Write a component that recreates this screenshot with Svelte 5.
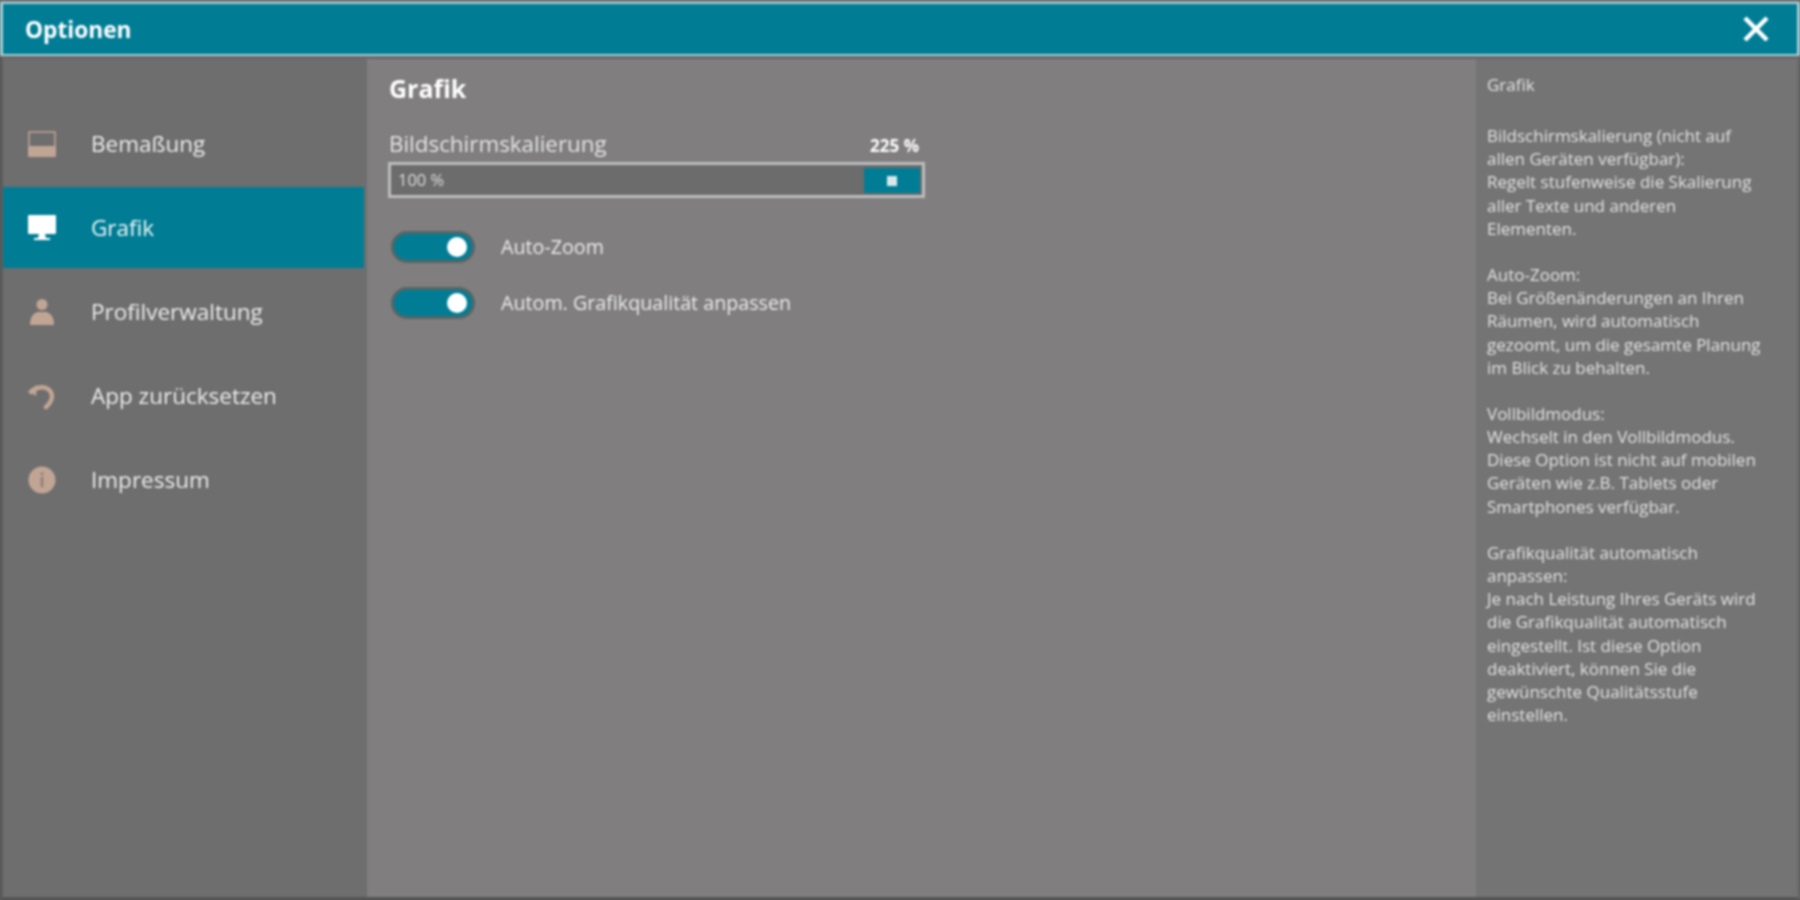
<script>
  const navItems = [
    { id: 'size', label: 'Bemaßung' },
    { id: 'screen', label: 'Grafik', active: true },
    { id: 'user', label: 'Profilverwaltung' },
    { id: 'undo', label: 'App zurücksetzen' },
    { id: 'info', label: 'Impressum' }
  ];

  const toggles = ['Auto-Zoom', 'Autom. Grafikqualität anpassen'];

  const help = [
    ['Grafik'],
    ['Bildschirmskalierung (nicht auf', 'allen Geräten verfügbar):', 'Regelt stufenweise die Skalierung', 'aller Texte und anderen', 'Elementen.'],
    ['Auto-Zoom:', 'Bei Größenänderungen an Ihren', 'Räumen, wird automatisch', 'gezoomt, um die gesamte Planung', 'im Blick zu behalten.'],
    ['Vollbildmodus:', 'Wechselt in den Vollbildmodus.', 'Diese Option ist nicht auf mobilen', 'Geräten wie z.B. Tablets oder', 'Smartphones verfügbar.'],
    ['Grafikqualität automatisch', 'anpassen:', 'Je nach Leistung Ihres Geräts wird', 'die Grafikqualität automatisch', 'eingestellt. Ist diese Option', 'deaktiviert, können Sie die', 'gewünschte Qualitätsstufe', 'einstellen.']
  ];
</script>

<div class="options">
  <header class="titlebar">
    <span class="title">Optionen</span>
    <svg class="close" viewBox="0 0 28 28" aria-label="Schließen">
      <path d="M3 3 L25 25 M25 3 L3 25" />
    </svg>
  </header>

  <div class="body">
    <nav class="sidebar">
      {#each navItems as item}
        <div class="nav-item" class:active={item.active}>
          <svg class="nav-icon" viewBox="0 0 28 28">
            {#if item.id === 'size'}
              <path class="outline" d="M1 16 V2 H27 V16" />
              <rect x="0" y="16" width="28" height="11" rx="1" />
            {:else if item.id === 'screen'}
              <rect x="0" y="1" width="28" height="19" rx="1" />
              <path d="M11 20 H17 L18 24 H22 V26 H6 V24 H10 Z" />
            {:else if item.id === 'user'}
              <circle cx="14" cy="6.5" r="5.5" />
              <path d="M2 27 C2 22 3 17 9 14 H19 C25 17 26 22 26 27 Z" />
            {:else if item.id === 'undo'}
              <path class="curve" d="M3 10 C8 5 15 4 20 7 C26 11 25 19 18 25" />
              <path d="M0 9 L9 3 L8 14 Z" />
            {:else}
              <circle cx="14" cy="14" r="13.5" />
              <rect class="cut" x="12.8" y="11" width="2.4" height="10" />
              <rect class="cut" x="12.8" y="6.5" width="2.4" height="2.6" />
            {/if}
          </svg>
          <span>{item.label}</span>
        </div>
      {/each}
    </nav>

    <main class="content">
      <h2>Grafik</h2>

      <div class="slider-head">
        <span class="slider-label">Bildschirmskalierung</span>
        <span class="slider-max">225 %</span>
      </div>
      <div class="slider">
        <div class="track">100 %</div>
        <div class="thumb"><i></i></div>
      </div>

      <div class="toggles">
        {#each toggles as label}
          <div class="toggle-row">
            <div class="toggle"><i></i></div>
            <span>{label}</span>
          </div>
        {/each}
      </div>
    </main>

    <aside class="help">
      {#each help as block}
        <p>
          {#each block as line}
            <span>{line}</span>
          {/each}
        </p>
      {/each}
    </aside>
  </div>
</div>

<style>
  :global(body) {
    margin: 0;
    background: #555;
  }

  .options {
    width: 1800px;
    height: 900px;
    display: flex;
    flex-direction: column;
    overflow: hidden;
    background: #807e7f;
    color: #f4f4f4;
    font-family: 'Open Sans', sans-serif;
    filter: blur(0.8px);
  }

  .titlebar {
    flex: none;
    height: 54px;
    box-sizing: border-box;
    margin: 2px 0 0;
    padding: 0 28px 0 22px;
    display: flex;
    align-items: center;
    justify-content: space-between;
    background: #007d95;
    border: 2px solid #a3d0d8;
    border-width: 2px 3px 2px 3px;
  }

  .title {
    font-size: 22.7px;
    font-weight: 700;
    color: #fff;
  }

  .close {
    width: 28px;
    height: 28px;
    margin-right: -1px;
  }

  .close path {
    fill: none;
    stroke: #fff;
    stroke-width: 4.5;
  }

  .body {
    flex: 1;
    min-height: 0;
    display: flex;
    border-left: 3px solid #5c5c5c;
    border-right: 3px solid #6a6a6a;
    border-bottom: 3px solid #555;
    border-top: 3px solid #6b6767;
  }

  .sidebar {
    flex: none;
    width: 364px;
    box-sizing: border-box;
    padding: 44px 3px 0 0;
    background: #6e6e6e;
    display: flex;
    flex-direction: column;
    gap: 3px;
  }

  .nav-item {
    height: 81px;
    display: flex;
    align-items: center;
    gap: 35px;
    padding-left: 25px;
    font-size: 22.5px;
    color: #ececec;
  }

  .nav-item.active {
    background: #007d95;
    color: #f2f7f8;
  }

  .nav-icon {
    flex: none;
    width: 28px;
    height: 28px;
    fill: #c0a595;
  }

  .nav-icon .outline,
  .nav-icon .curve {
    fill: none;
    stroke: #c0a595;
    stroke-width: 1.5;
  }

  .nav-icon .curve {
    stroke-width: 4.5;
    stroke-linecap: round;
  }

  .nav-icon .cut {
    fill: #8f7b70;
  }

  .nav-item.active .nav-icon {
    fill: #fff;
  }

  .content {
    flex: 1;
    min-width: 0;
    padding: 13px 22px;
  }

  h2 {
    margin: 0;
    font-size: 25px;
    line-height: 33px;
    font-weight: 700;
    color: #fff;
  }

  .slider-head {
    width: 537px;
    margin-top: 24px;
    display: flex;
    align-items: flex-end;
    justify-content: space-between;
  }

  .slider-label {
    font-size: 22.4px;
    line-height: 30px;
    color: #e4e4e4;
  }

  .slider-max {
    font-size: 17px;
    line-height: 24px;
    font-weight: 700;
    color: #fff;
    padding: 0 7px 1px 0;
  }

  .slider {
    width: 537px;
    height: 36px;
    margin: 3px 0 0 -1px;
    box-sizing: border-box;
    border: 3px solid #bdbdbd;
    display: flex;
    align-items: stretch;
    background: #6c6c6c;
  }

  .track {
    flex: 1;
    padding-left: 7px;
    font-size: 16.5px;
    line-height: 30px;
    color: #dddddd;
  }

  .thumb {
    flex: none;
    width: 56px;
    margin: 3px 2px 2px 0;
    background: #007d95;
    display: flex;
    align-items: center;
    justify-content: center;
  }

  .thumb i {
    width: 10px;
    height: 10px;
    background: #d8e8ea;
  }

  .toggles {
    margin-top: 33px;
    display: flex;
    flex-direction: column;
    gap: 24px;
  }

  .toggle-row {
    display: flex;
    align-items: center;
    gap: 26px;
    padding-left: 2px;
    font-size: 19.7px;
    color: #ececec;
  }

  .toggle-row span {
    margin-top: -2px;
  }

  .toggle {
    width: 84px;
    height: 32px;
    box-sizing: border-box;
    border: 3px solid #566;
    border-radius: 16px;
    background: #007d95;
    display: flex;
    align-items: center;
    justify-content: flex-end;
    padding-right: 5px;
  }

  .toggle i {
    width: 20px;
    height: 20px;
    border-radius: 50%;
    background: #fff;
  }

  .help {
    flex: none;
    width: 321px;
    box-sizing: border-box;
    padding: 14px 8px 0 11px;
    background: #747474;
    font-size: 17px;
    line-height: 23.15px;
    color: #e2e2e2;
    white-space: nowrap;
  }

  .help p {
    margin: 0 0 23.15px;
  }

  .help p:first-child {
    margin-bottom: 28px;
  }

  .help span {
    display: block;
  }
</style>
